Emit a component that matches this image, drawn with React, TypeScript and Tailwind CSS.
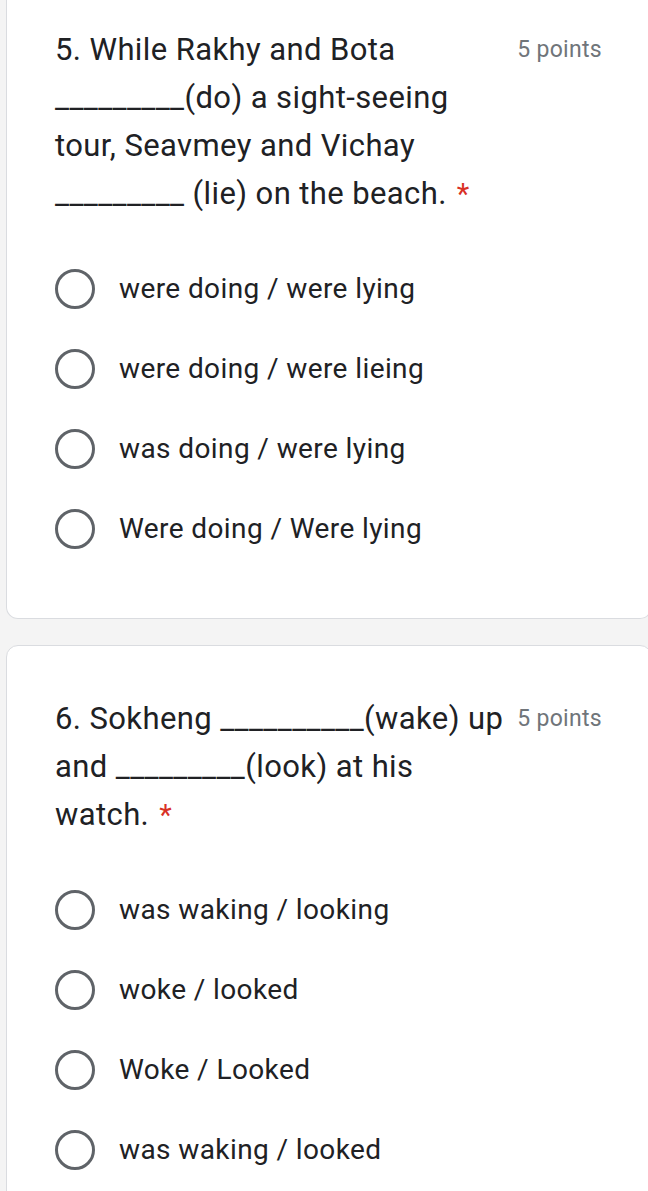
import React from "react";

type Question = {
  lines: string[];
  options: string[];
};

const questions: Question[] = [
  {
    lines: [
      "5. While Rakhy and Bota",
      "_________(do) a sight-seeing",
      "tour, Seavmey and Vichay",
      "_________ (lie) on the beach.",
    ],
    options: [
      "were doing / were lying",
      "were doing / were lieing",
      "was doing / were lying",
      "Were doing / Were lying",
    ],
  },
  {
    lines: [
      "6. Sokheng __________(wake) up",
      "and _________(look) at his",
      "watch.",
    ],
    options: [
      "was waking / looking",
      "woke / looked",
      "Woke / Looked",
      "was waking / looked",
    ],
  },
];

const Radio = () => (
  <div className="w-[40px] h-[40px] rounded-full border-[3px] border-[#5f6368] flex-shrink-0" />
);

const QuestionCard = ({ q, first }: { q: Question; first?: boolean }) => {
  return (
    <div
      className={`bg-white border border-[#dadce0] ml-[6px] mr-[-4px] rounded-[12px] pl-[48px] pr-[49px] ${
        first ? "border-t-0 rounded-t-none pt-[26px]" : "pt-[49px]"
      } pb-[49px]`}
    >
      {/* Title + points */}
      <div className="flex items-start justify-between">
        <div className="text-[31px] leading-[48px] text-[#202124] tracking-[0.4px]">
          {q.lines.map((line, i) => (
            <div key={i} className="whitespace-nowrap">
              {line}
              {i === q.lines.length - 1 && (
                <span className="text-[#d93025] ml-[10px] text-[29px]">*</span>
              )}
            </div>
          ))}
        </div>
        <div className="text-[23px] leading-[48px] text-[#70757a] tracking-[0.3px] whitespace-nowrap">
          5 points
        </div>
      </div>

      {/* Options */}
      <div className="mt-[31px] flex flex-col">
        {q.options.map((opt) => (
          <div key={opt} className="h-[80px] flex items-center gap-[24px]">
            <Radio />
            <span className="text-[28px] text-[#202124] tracking-[0.4px]">{opt}</span>
          </div>
        ))}
      </div>
    </div>
  );
};

export default function App() {
  return (
    <div
      className="w-[648px] h-[1191px] overflow-hidden bg-[#f4f4f4]"
      style={{ fontFamily: "Roboto, 'Liberation Sans', sans-serif" }}
    >
      <div className="flex flex-col gap-[26px]">
        <QuestionCard q={questions[0]} first />
        <QuestionCard q={questions[1]} />
      </div>
    </div>
  );
}
